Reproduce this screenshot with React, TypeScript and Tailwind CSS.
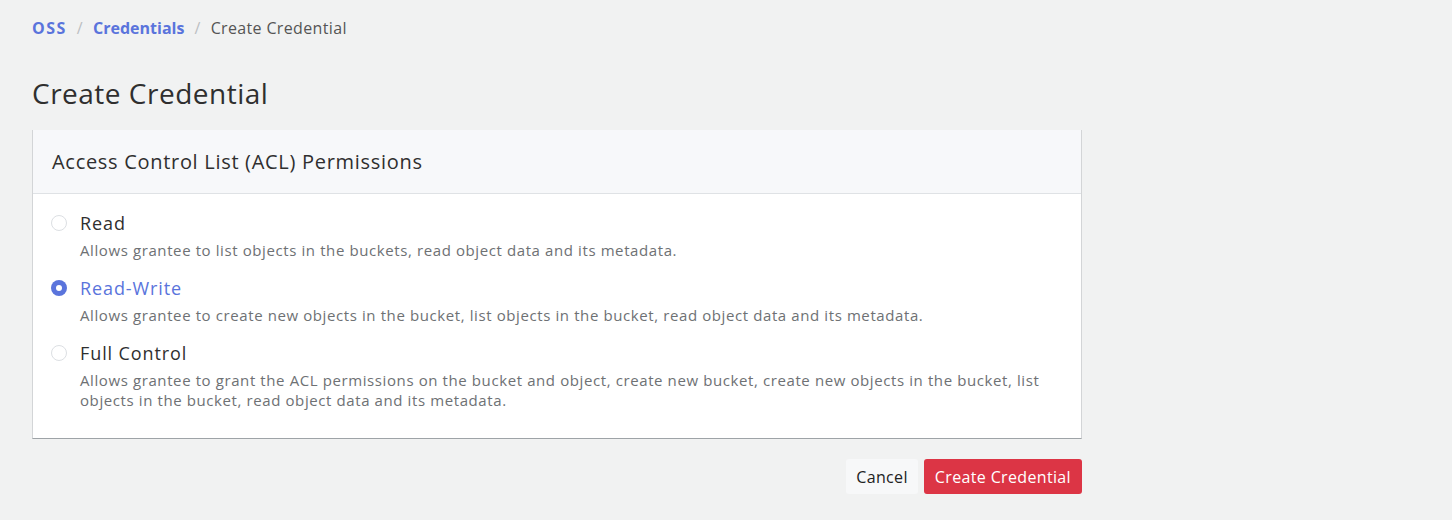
import React, { useState } from 'react';

const options = [
  {
    id: 'read',
    label: 'Read',
    description: 'Allows grantee to list objects in the buckets, read object data and its metadata.',
  },
  {
    id: 'read-write',
    label: 'Read-Write',
    description:
      'Allows grantee to create new objects in the bucket, list objects in the bucket, read object data and its metadata.',
  },
  {
    id: 'full-control',
    label: 'Full Control',
    description:
      'Allows grantee to grant the ACL permissions on the bucket and object, create new bucket, create new objects in the bucket, list objects in the bucket, read object data and its metadata.',
  },
];

export default function App() {
  const [selected, setSelected] = useState('read-write');

  return (
    <div className="min-h-[520px] bg-[#f1f2f2] px-8 pt-4 text-[#333] font-['Open_Sans','Lato',sans-serif]">
      {/* Breadcrumb */}
      <nav className="flex items-center text-base leading-6 tracking-[0.35px]">
        <a className="font-bold text-[#5a74dc] tracking-[1.5px]">OSS</a>
        <span className="mx-[10px] text-[#bcbfc2]">/</span>
        <a className="font-bold text-[#5a74dc] tracking-normal">Credentials</a>
        <span className="mx-[10px] text-[#bcbfc2]">/</span>
        <span className="text-[#555]">Create Credential</span>
      </nav>

      <h1 className="mt-9 mb-5 text-[28px] leading-[34px] tracking-[0.5px] text-[#2f2f2f]">Create Credential</h1>

      <div className="w-[1050px] bg-white border-x border-[#d3d5d7] border-b border-b-[#9ea3a7]">
        <div className="h-16 flex items-center px-[19px] bg-[#f7f8fa] border-b border-[#dfe2e5]">
          <h2 className="text-xl tracking-[0.7px] text-[#2f2f2f]">Access Control List (ACL) Permissions</h2>
        </div>

        <div className="pl-[18px] pr-[19px] pt-4 pb-7">
          {options.map((opt, i) => {
            const checked = selected === opt.id;
            return (
              <label key={opt.id} className={`flex items-start cursor-pointer ${i > 0 ? 'mt-[15px]' : ''}`}>
                <span className="h-[26px] flex items-center">
                  <span
                    className={`w-4 h-4 rounded-full flex items-center justify-center ${
                      checked ? 'bg-[#5a74dc]' : 'bg-white border border-[#dcdfe3]'
                    }`}
                  >
                    {checked && <span className="w-[6px] h-[6px] rounded-full bg-white" />}
                  </span>
                </span>
                <input
                  type="radio"
                  name="acl"
                  className="hidden"
                  checked={checked}
                  onChange={() => setSelected(opt.id)}
                />
                <span className="ml-[13px] flex-1">
                  <span
                    className={`block text-lg leading-[26px] tracking-[0.9px] ${
                      checked ? 'text-[#5a74dc]' : 'text-[#2f2f2f]'
                    }`}
                  >
                    {opt.label}
                  </span>
                  <span className="block mt-1 text-[15px] leading-5 tracking-[0.6px] text-[#6e7174]">
                    {opt.description}
                  </span>
                </span>
              </label>
            );
          })}
        </div>
      </div>

      <div className="w-[1050px] flex justify-end gap-[6px] mt-5 tracking-[0.35px]">
        <button className="h-[35px] px-[10px] bg-[#f7f8f9] text-base text-[#222] rounded-[3px]">Cancel</button>
        <button className="h-[35px] px-[11px] bg-[#dc3545] text-base text-white rounded-[3px]">Create Credential</button>
      </div>
    </div>
  );
}
